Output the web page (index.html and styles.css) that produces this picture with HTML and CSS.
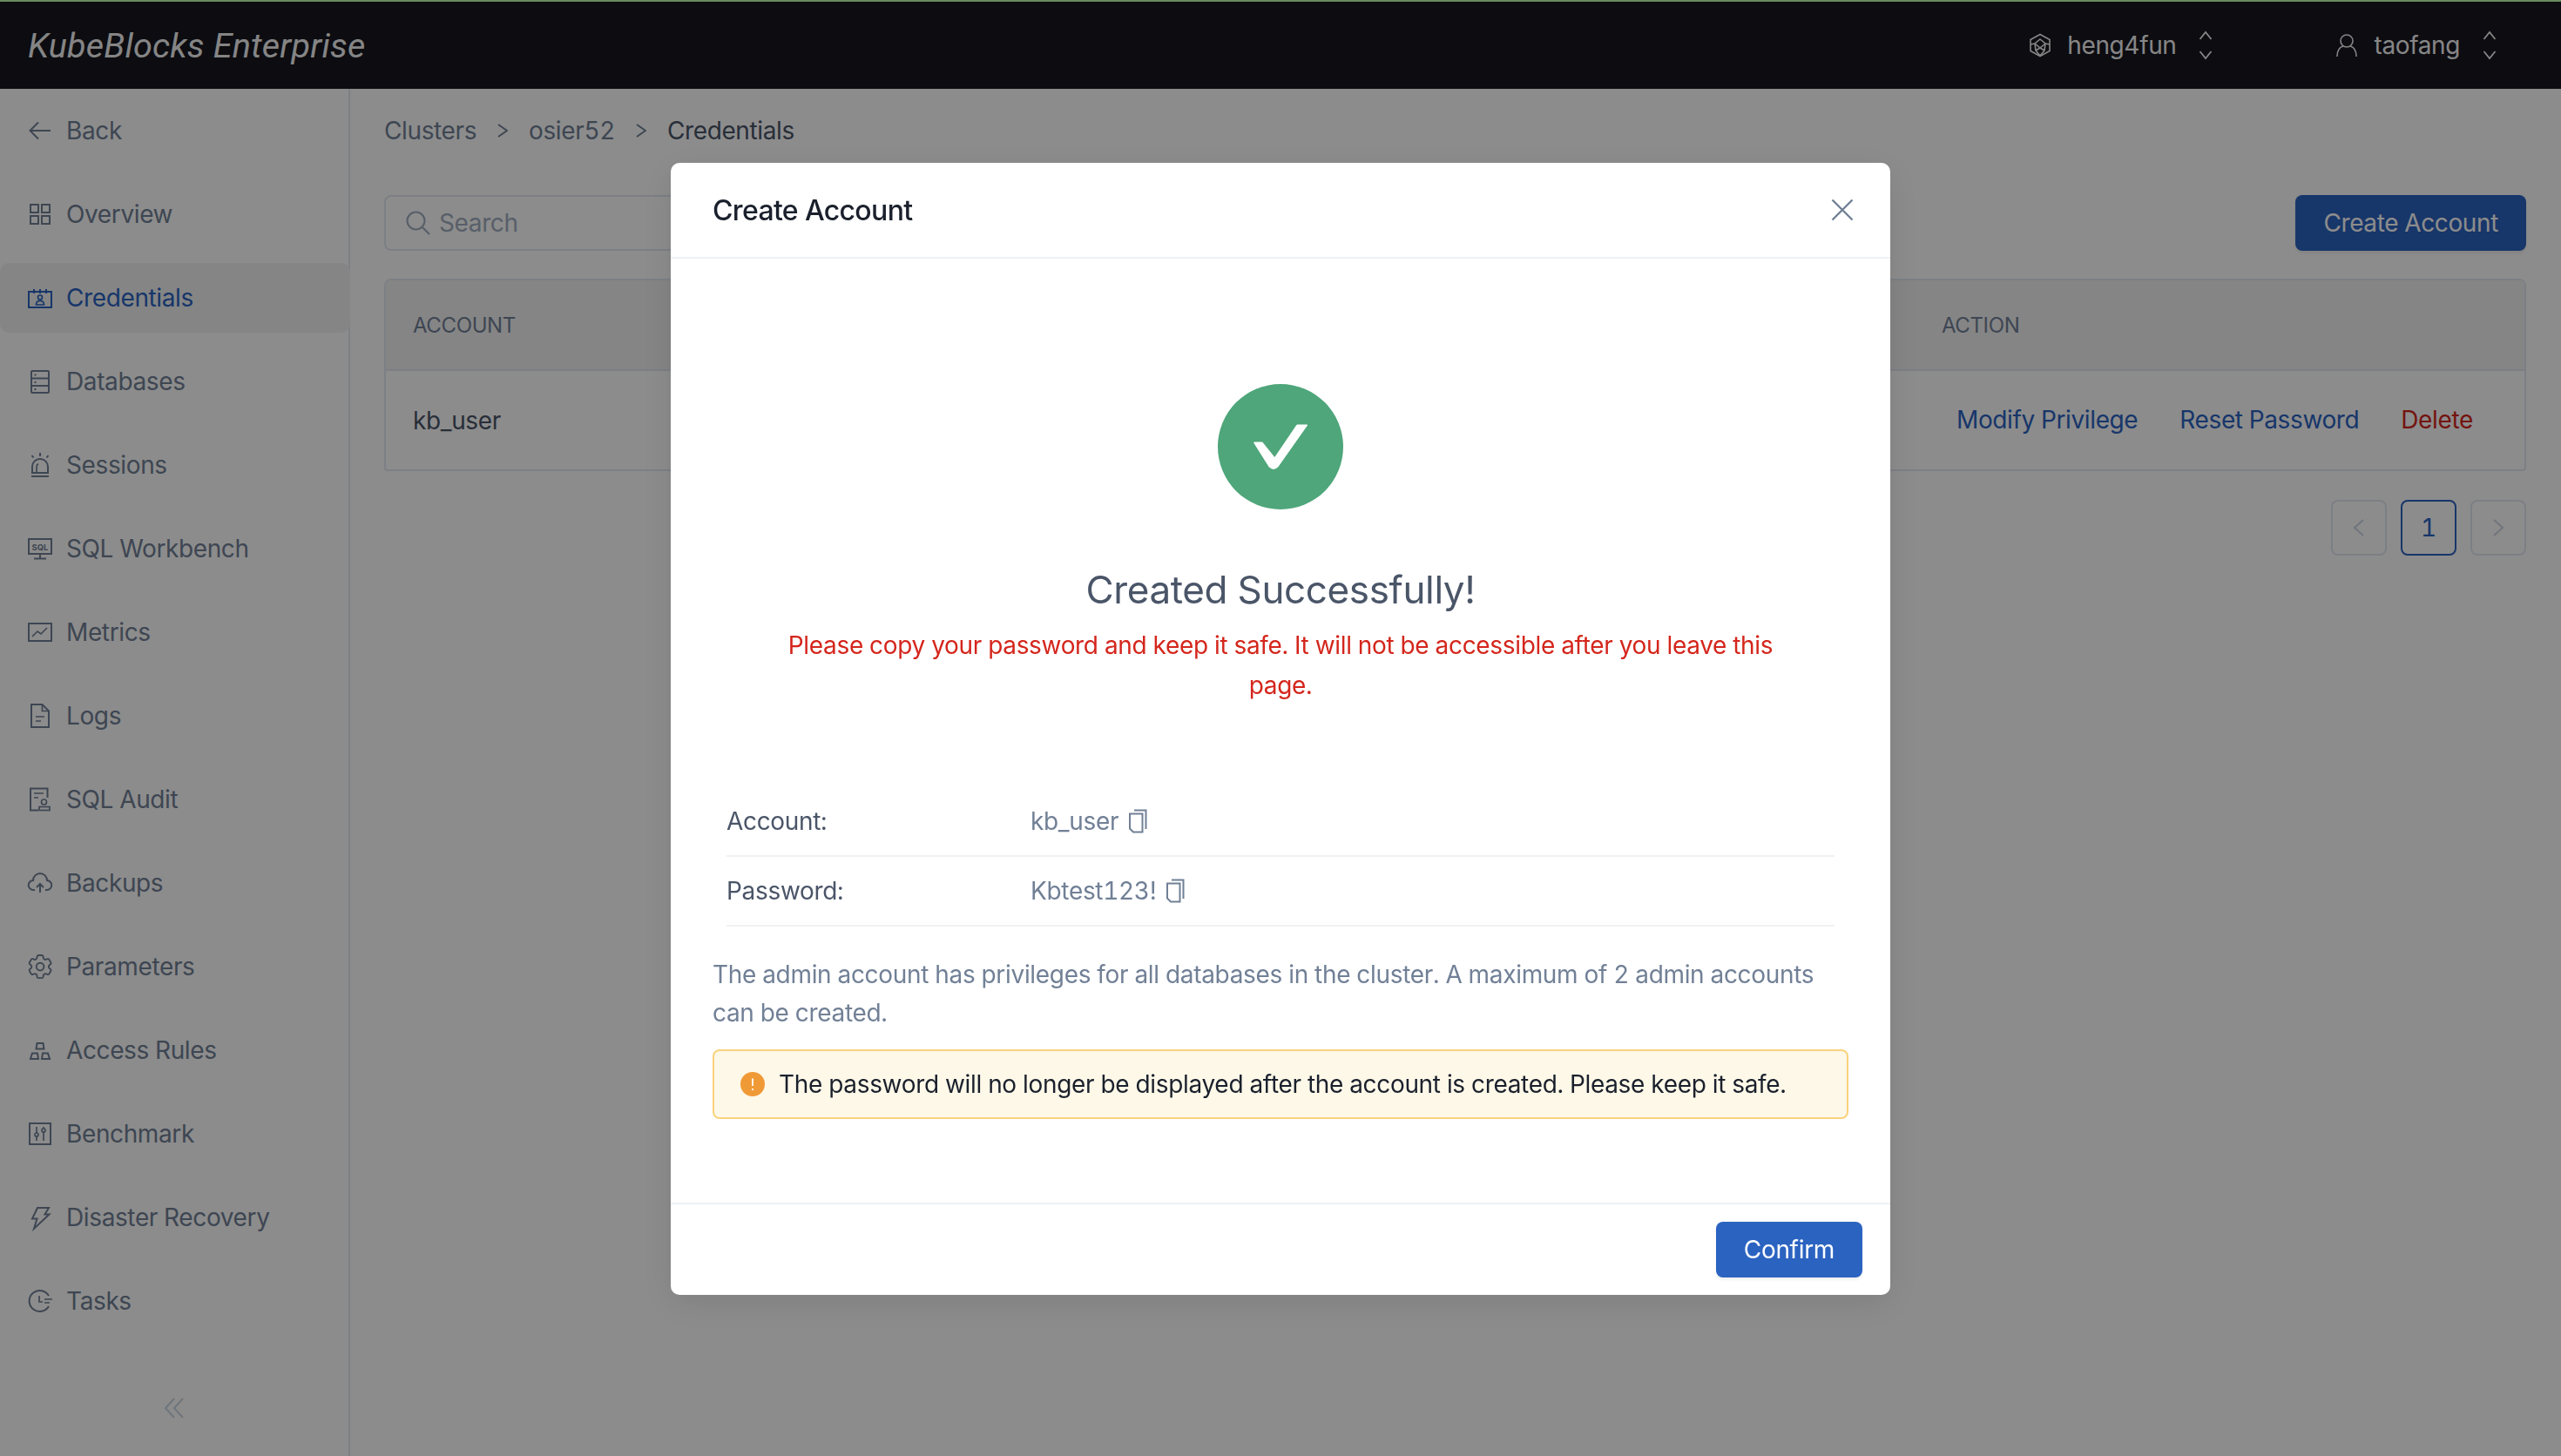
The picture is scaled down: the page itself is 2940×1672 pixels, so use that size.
FILE: index.html
```html
<!DOCTYPE html>
<html lang="en">
<head>
<meta charset="utf-8">
<title>Create Account</title>
<link rel="stylesheet" href="styles.css">
</head>
<body>
<div class="app">
  <header class="topbar">
    <div class="logo">KubeBlocks Enterprise</div>
    <div class="top-right">
      <div class="top-item org">
        <svg class="top-ico" viewBox="0 0 28 28"><path d="M14 1.500 25 7.500V20.500L14 26.500 3 20.500V7.500Z"/><path d="M14 7 20 12 14 17 8 12ZM3 13l5-1M25 13l-5-1M8 12l1 8 5 6M20 12l-1 8-5 6M14 17l-5 3M14 17l5 3"/></svg>
        <span>heng4fun</span>
        <svg class="updown" viewBox="0 0 16 36"><path d="M1.500 11 8 3l6.500 8M1.500 25 8 33l6.500-8"/></svg>
      </div>
      <div class="top-item user">
        <svg class="top-ico" viewBox="0 0 28 28"><circle cx="14" cy="9" r="7"/><path d="M3 27c0-7 3-11 7-12M25 27c0-7-3-11-7-12"/></svg>
        <span>taofang</span>
        <svg class="updown" viewBox="0 0 16 36"><path d="M1.500 11 8 3l6.500 8M1.500 25 8 33l6.500-8"/></svg>
      </div>
    </div>
  </header>
  <div class="layout">
    <nav class="sidebar">
      <a class="nav-item"><svg class="ico" viewBox="0 0 28 28"><path d="M26 14H3M12 4.500 2.500 14l9.500 9.500"/></svg><span>Back</span></a>
      <a class="nav-item"><svg class="ico" viewBox="0 0 28 28"><rect x="3" y="3" width="9" height="9"/><rect x="16" y="3" width="9" height="9"/><rect x="3" y="16" width="9" height="9"/><rect x="16" y="16" width="9" height="9"/></svg><span>Overview</span></a>
      <a class="nav-item active"><svg class="ico" viewBox="0 0 28 28"><rect x="1" y="7" width="26" height="18"/><path d="M7 4v5M14 4v5M21 4v5"/><circle cx="14" cy="13.500" r="2.500" class="thin"/><path class="thin" d="M9.500 22c0-3 2-4.500 4.500-4.500s4.500 1.500 4.500 4.500z"/></svg><span>Credentials</span></a>
      <a class="nav-item"><svg class="ico" viewBox="0 0 28 28"><rect x="4" y="2" width="20" height="25" rx="1"/><path d="M4 10.500H24M4 19H24"/><path d="M7.500 6.500h2M7.500 15h2M7.500 23h2"/></svg><span>Databases</span></a>
      <a class="nav-item"><svg class="ico" viewBox="0 0 28 28"><path d="M14 0V4M4.500 3l2 2.500M23.500 3l-2 2.500M4 27H24"/><path d="M5 23V16a9 9 0 0 1 18 0v7z"/><path d="M10 23v-7a4 4 0 0 1 2-3.500" class="thin"/></svg><span>Sessions</span></a>
      <a class="nav-item"><svg class="ico" viewBox="0 0 28 28"><rect x="1" y="3" width="26" height="17"/><path d="M14 20v5M7 25.500H21"/><text x="14" y="15.500" class="ico-text">SQL</text></svg><span>SQL Workbench</span></a>
      <a class="nav-item"><svg class="ico" viewBox="0 0 28 28"><rect x="1" y="4" width="26" height="20"/><path d="M5 19l6-6 4 3 7-7" class="thin"/></svg><span>Metrics</span></a>
      <a class="nav-item"><svg class="ico" viewBox="0 0 28 28"><path d="M4 1H16.500L24 8.500V27H4Z"/><path d="M16.500 1V8.500H24M9 15H19M9 20H15" class="thin"/></svg><span>Logs</span></a>
      <a class="nav-item"><svg class="ico" viewBox="0 0 28 28"><path d="M22.500 12V1.500H3V26.500H12"/><path d="M7 7H18M7 12H12" class="thin"/><circle cx="18.500" cy="17" r="3" class="thin"/><rect x="13" y="22.500" width="12" height="4" class="thin"/></svg><span>SQL Audit</span></a>
      <a class="nav-item"><svg class="ico" viewBox="0 0 28 28"><path d="M8 22H6.500A5.500 5.500 0 0 1 6 11 8 8 0 0 1 22 11 5.500 5.500 0 0 1 21.500 22H20"/><path d="M14 25V15M10 19l4-4 4 4"/></svg><span>Backups</span></a>
      <a class="nav-item"><svg class="ico" viewBox="0 0 28 28"><g transform="translate(-3.300 -3.300) scale(1.450)" class="gear"><path d="M9.594 3.940c.09-.542.56-.94 1.110-.94h2.593c.55 0 1.020.398 1.110.94l.213 1.281c.063.374.313.686.645.87.074.04.147.083.22.127.324.196.72.257 1.075.124l1.217-.456a1.125 1.125 0 0 1 1.370.49l1.296 2.247a1.125 1.125 0 0 1-.26 1.431l-1.003.827c-.293.24-.438.613-.431.992a6.759 6.759 0 0 1 0 .255c-.007.378.138.75.43.99l1.005.828c.424.35.534.954.26 1.430l-1.298 2.247a1.125 1.125 0 0 1-1.369.491l-1.217-.456c-.355-.133-.75-.072-1.076.124a6.570 6.570 0 0 1-.22.128c-.331.183-.581.495-.644.869l-.213 1.280c-.09.543-.56.941-1.110.941h-2.594c-.55 0-1.020-.398-1.110-.94l-.213-1.281c-.062-.374-.312-.686-.644-.87a6.520 6.520 0 0 1-.22-.127c-.325-.196-.72-.257-1.076-.124l-1.217.456a1.125 1.125 0 0 1-1.369-.49l-1.297-2.247a1.125 1.125 0 0 1 .26-1.431l1.004-.827c.292-.24.437-.613.43-.992a6.932 6.932 0 0 1 0-.255c.007-.378-.138-.75-.43-.99l-1.004-.828a1.125 1.125 0 0 1-.26-1.430l1.297-2.247a1.125 1.125 0 0 1 1.370-.491l1.216.456c.356.133.751.072 1.076-.124.072-.044.146-.087.22-.128.332-.183.582-.495.644-.869l.214-1.281z"/><circle cx="12" cy="12" r="3"/></g></svg><span>Parameters</span></a>
      <a class="nav-item"><svg class="ico" viewBox="0 0 28 28"><path d="M10.500 6h7l1 6.500h-9zM5 17.500h6l1 6.500H3zM17 17.500h6l2 6.500H16z"/></svg><span>Access Rules</span></a>
      <a class="nav-item"><svg class="ico" viewBox="0 0 28 28"><rect x="2" y="2" width="24" height="24"/><path d="M10 6V13M10 17V22M18 6V8M18 12V22" class="thin"/><circle cx="10" cy="15" r="2" class="thin"/><circle cx="18" cy="10" r="2" class="thin"/></svg><span>Benchmark</span></a>
      <a class="nav-item"><svg class="ico" viewBox="0 0 28 28"><path d="M11 3H24L19.500 10.500H24.500L7 27 10.500 15.500H5Z"/></svg><span>Disaster Recovery</span></a>
      <a class="nav-item"><svg class="ico" viewBox="0 0 28 28"><path d="M24 8A12 12 0 1 0 24 20"/><path d="M13 8V15H17M19 12H28M19 16H25" class="thin"/></svg><span>Tasks</span></a>
      <div class="collapse"><svg viewBox="0 0 24 24" class="collapse-ico"><path d="M12 1 2 12l10 11M22 1 12 12l10 11"/></svg></div>
    </nav>
    <main class="main">
      <div class="crumbs">
        <span>Clusters</span>
        <svg class="crumb-sep" viewBox="0 0 12 20"><path d="M1 3l10 7-10 7"/></svg>
        <span>osier52</span>
        <svg class="crumb-sep" viewBox="0 0 12 20"><path d="M1 3l10 7-10 7"/></svg>
        <span class="current">Credentials</span>
      </div>
      <div class="toolbar">
        <div class="search">
          <svg class="search-ico" viewBox="0 0 28 28"><circle cx="11.500" cy="11.500" r="10"/><path d="M18.500 18.500 27 27"/></svg>
          <span>Search</span>
        </div>
        <button class="btn">Create Account</button>
      </div>
      <div class="table">
        <div class="thead"><div class="col-main">ACCOUNT</div><div class="col-action">ACTION</div></div>
        <div class="tbody">
          <div class="col-main">kb_user</div>
          <div class="col-action links"><a class="link">Modify Privilege</a><a class="link">Reset Password</a><a class="link danger">Delete</a></div>
        </div>
      </div>
      <div class="pager">
        <div class="page"><svg class="page-ico" viewBox="0 0 16 24"><path d="M13 3 3 12l10 9"/></svg></div>
        <div class="page current">1</div>
        <div class="page"><svg class="page-ico" viewBox="0 0 16 24"><path d="M3 3l10 9-10 9"/></svg></div>
      </div>
    </main>
  </div>
</div>
<div class="overlay">
  <section class="modal">
    <div class="modal-head">
      <h2>Create Account</h2>
      <svg class="close" viewBox="0 0 26 26"><path d="M1.500 1.500l23 23M24.500 1.500l-23 23"/></svg>
    </div>
    <div class="modal-body">
      <div class="result">
        <svg class="check" viewBox="0 0 144 144"><circle cx="72" cy="72" r="72"/><path d="M42 66.500H50.500Q51.500 66.500 52 67.500L65.300 84 90 47.500Q90.500 46.500 91.500 46.500H102Q103.500 46.500 103 47.500L69.500 95Q64 101 58.500 95L41.500 68Q41 66.500 42 66.500Z"/></svg>
        <h3>Created Successfully!</h3>
        <p class="error">Please copy your password and keep it safe. It will not be accessible after you leave this page.</p>
      </div>
      <div class="rows">
        <div class="row"><div class="row-label">Account:</div><div class="row-value">kb_user<svg class="copy" viewBox="0 0 22 28"><path d="M7 1.500H20.500V23"/><path d="M2 5.500H16.500V26.500H6L2 22.500Z"/></svg></div></div>
        <div class="row"><div class="row-label">Password:</div><div class="row-value">Kbtest123!<svg class="copy" viewBox="0 0 22 28"><path d="M7 1.500H20.500V23"/><path d="M2 5.500H16.500V26.500H6L2 22.500Z"/></svg></div></div>
      </div>
      <p class="desc">The admin account has privileges for all databases in the cluster. A maximum of 2 admin accounts can be created.</p>
      <div class="alert">
        <svg class="alert-ico" viewBox="0 0 28 28"><circle cx="14" cy="14" r="14"/><path d="M14 7.500V16M14 19v2"/></svg>
        <span>The password will no longer be displayed after the account is created. Please keep it safe.</span>
      </div>
    </div>
    <div class="modal-foot"><button class="btn primary">Confirm</button></div>
  </section>
</div>
</body>
</html>
```

FILE: styles.css
```css
* { box-sizing: border-box; }
html, body { margin: 0; height: 100%; }
body {
  font-family: Inter, "Liberation Sans", sans-serif;
  font-size: 28px;
  letter-spacing: -0.38px;
  font-variant-numeric: tabular-nums;
  color: #4a5568;
  background: #fff;
  overflow: hidden;
}
h2, h3, p { margin: 0; font-weight: 400; }

.app { height: 1672px; display: flex; flex-direction: column; }

.topbar {
  height: 102px;
  flex: none;
  background: #171720;
  border-top: 2px solid #c1fbac;
  display: flex;
  align-items: center;
  justify-content: space-between;
  padding: 0 74px 0 32px;
  color: #f4f4f4;
}
.logo {
  font-family: Roboto, sans-serif;
  font-style: italic;
  font-size: 39.500px;
  letter-spacing: 0.2px;
  color: #fff;
  opacity: .95;
}
.top-right { display: flex; align-items: center; }
.top-item { display: flex; align-items: center; gap: 17px; }
.org { margin-right: 140px; }
.top-ico { width: 28px; height: 28px; fill: none; stroke: currentColor; stroke-width: 1.600; }
.updown { width: 16px; height: 36px; margin-left: 9px; fill: none; stroke: currentColor; stroke-width: 1.800; }

.layout { flex: 1; display: flex; min-height: 0; }

.sidebar {
  width: 402px;
  flex: none;
  border-right: 2px solid #e2e8f0;
  padding-top: 8px;
  display: flex;
  flex-direction: column;
  gap: 16px;
  color: #718096;
}
.nav-item {
  height: 80px;
  flex: none;
  display: flex;
  align-items: center;
  gap: 16px;
  padding-left: 32px;
  border-radius: 10px;
}
.nav-item.active { background: #f3f3f3; color: #2b63c1; margin-right: -2px; position: relative; }
.ico {
  width: 28px;
  height: 28px;
  flex: none;
  fill: none;
  stroke: currentColor;
  stroke-width: 2;
  overflow: visible;
}
.ico .thin { stroke-width: 1.700; }
.ico .gear { stroke-width: 1.300; }
.ico-text {
  font-family: Inter, sans-serif;
  font-size: 9.500px;
  font-weight: 700;
  letter-spacing: 0;
  text-anchor: middle;
  fill: currentColor;
  stroke: none;
}
.collapse { flex: 1; display: flex; align-items: center; justify-content: center; padding-top: 12px; }
.collapse-ico { width: 24px; height: 24px; fill: none; stroke: #cbd5e0; stroke-width: 2; }

.main { flex: 1; min-width: 0; padding: 0 40px 0 39px; }
.crumbs { height: 96px; display: flex; align-items: center; gap: 24px; color: #718096; }
.crumbs .current { color: #4a5568; }
.crumb-sep { width: 12px; height: 20px; fill: none; stroke: #718096; stroke-width: 2; }

.toolbar { margin-top: 26px; display: flex; justify-content: space-between; align-items: center; height: 64px; }
.search {
  width: 640px;
  height: 64px;
  border: 2px solid #e2e8f0;
  border-radius: 8px;
  display: flex;
  align-items: center;
  gap: 10px;
  padding-left: 23px;
  color: #a0aec0;
}
.search-ico { width: 28px; height: 28px; fill: none; stroke: #a0aec0; stroke-width: 2.200; }
.btn {
  height: 64px;
  padding: 0 32px;
  border: 0;
  border-radius: 8px;
  background: #2b63c1;
  color: #fff;
  font: inherit;
  letter-spacing: inherit;
  box-shadow: 0 3px 3px rgba(0,0,0,.06);
}

.table { margin-top: 32px; border: 2px solid #e2e8f0; border-radius: 8px 8px 4px 4px; overflow: hidden; }
.thead {
  height: 104px;
  display: flex;
  align-items: center;
  justify-content: space-between;
  background: #f2f2f4;
  border-bottom: 2px solid #e2e8f0;
  font-size: 24px;
  color: #718096;
}
.tbody { height: 113px; display: flex; align-items: center; justify-content: space-between; color: #4a5568; }
.col-main { padding-left: 31px; }
.col-action { width: 669px; }
.links { display: flex; gap: 48px; padding-left: 17px; padding-bottom: 1px; }
.link { color: #2b63c1; }
.link.danger { color: #d4261c; }

.pager { margin-top: 33px; display: flex; justify-content: flex-end; gap: 16px; }
.page {
  width: 64px;
  height: 64px;
  border: 2px solid #e2e8f0;
  border-radius: 8px;
  display: flex;
  align-items: center;
  justify-content: center;
}
.page.current { border-color: #2b63c1; color: #2b63c1; }
.page-ico { width: 16px; height: 24px; fill: none; stroke: #cbd5e0; stroke-width: 2; }

.overlay {
  position: fixed;
  inset: 0;
  background: rgba(0,0,0,.45);
  display: flex;
  align-items: center;
  justify-content: center;
  padding-top: 2px;
}
.modal {
  width: 1400px;
  height: 1300px;
  background: #fff;
  border-radius: 10px;
  box-shadow: 0 10px 40px rgba(0,0,0,.1);
  display: flex;
  flex-direction: column;
  letter-spacing: -0.32px;
}
.modal-head {
  height: 110px;
  flex: none;
  display: flex;
  align-items: center;
  justify-content: space-between;
  padding: 0 42px 0 48px;
  border-bottom: 2px solid #edf0f4;
}
.modal-head h2 { font-size: 32px; font-weight: 500; letter-spacing: -0.65px; color: #1a202c; }
.close { width: 26px; height: 26px; fill: none; stroke: #718096; stroke-width: 2.400; }

.modal-body { flex: 1; padding: 0 48px; min-height: 0; }
.result { display: flex; flex-direction: column; align-items: center; padding-top: 144px; }
.check { width: 144px; height: 144px; display: block; }
.check circle { fill: #4ea67a; }
.check path { fill: #fff; }
.result h3 { margin-top: 62px; font-size: 44px; line-height: 60px; letter-spacing: -0.38px; color: #4a5568; }
.error { margin-top: 11px; max-width: 1180px; text-align: center; line-height: 46px; color: #d4261c; }

.rows { margin: 94px 16px 0; }
.row { height: 80px; display: flex; align-items: center; border-bottom: 2px solid #f0f1f3; }
.row-label { width: 349px; color: #4a5568; }
.row-value { display: flex; align-items: center; gap: 11px; color: #718096; }
.copy { width: 22px; height: 28px; fill: none; stroke: #718096; stroke-width: 2; }

.desc { margin-top: 33px; line-height: 44px; color: #718096; }
.alert {
  margin-top: 20px;
  height: 80px;
  display: flex;
  align-items: center;
  gap: 16px;
  padding-left: 30px;
  background: #fef8e8;
  border: 2px solid #f9d27d;
  border-radius: 8px;
  color: #1a202c;
}
.alert-ico { width: 28px; height: 28px; flex: none; }
.alert-ico circle { fill: #f09a37; }
.alert-ico path { fill: none; stroke: #fff; stroke-width: 1.800; }

.modal-foot {
  height: 106px;
  flex: none;
  display: flex;
  align-items: flex-start;
  justify-content: flex-end;
  padding: 20px 32px 0 0;
  border-top: 2px solid #edf0f4;
}
```
